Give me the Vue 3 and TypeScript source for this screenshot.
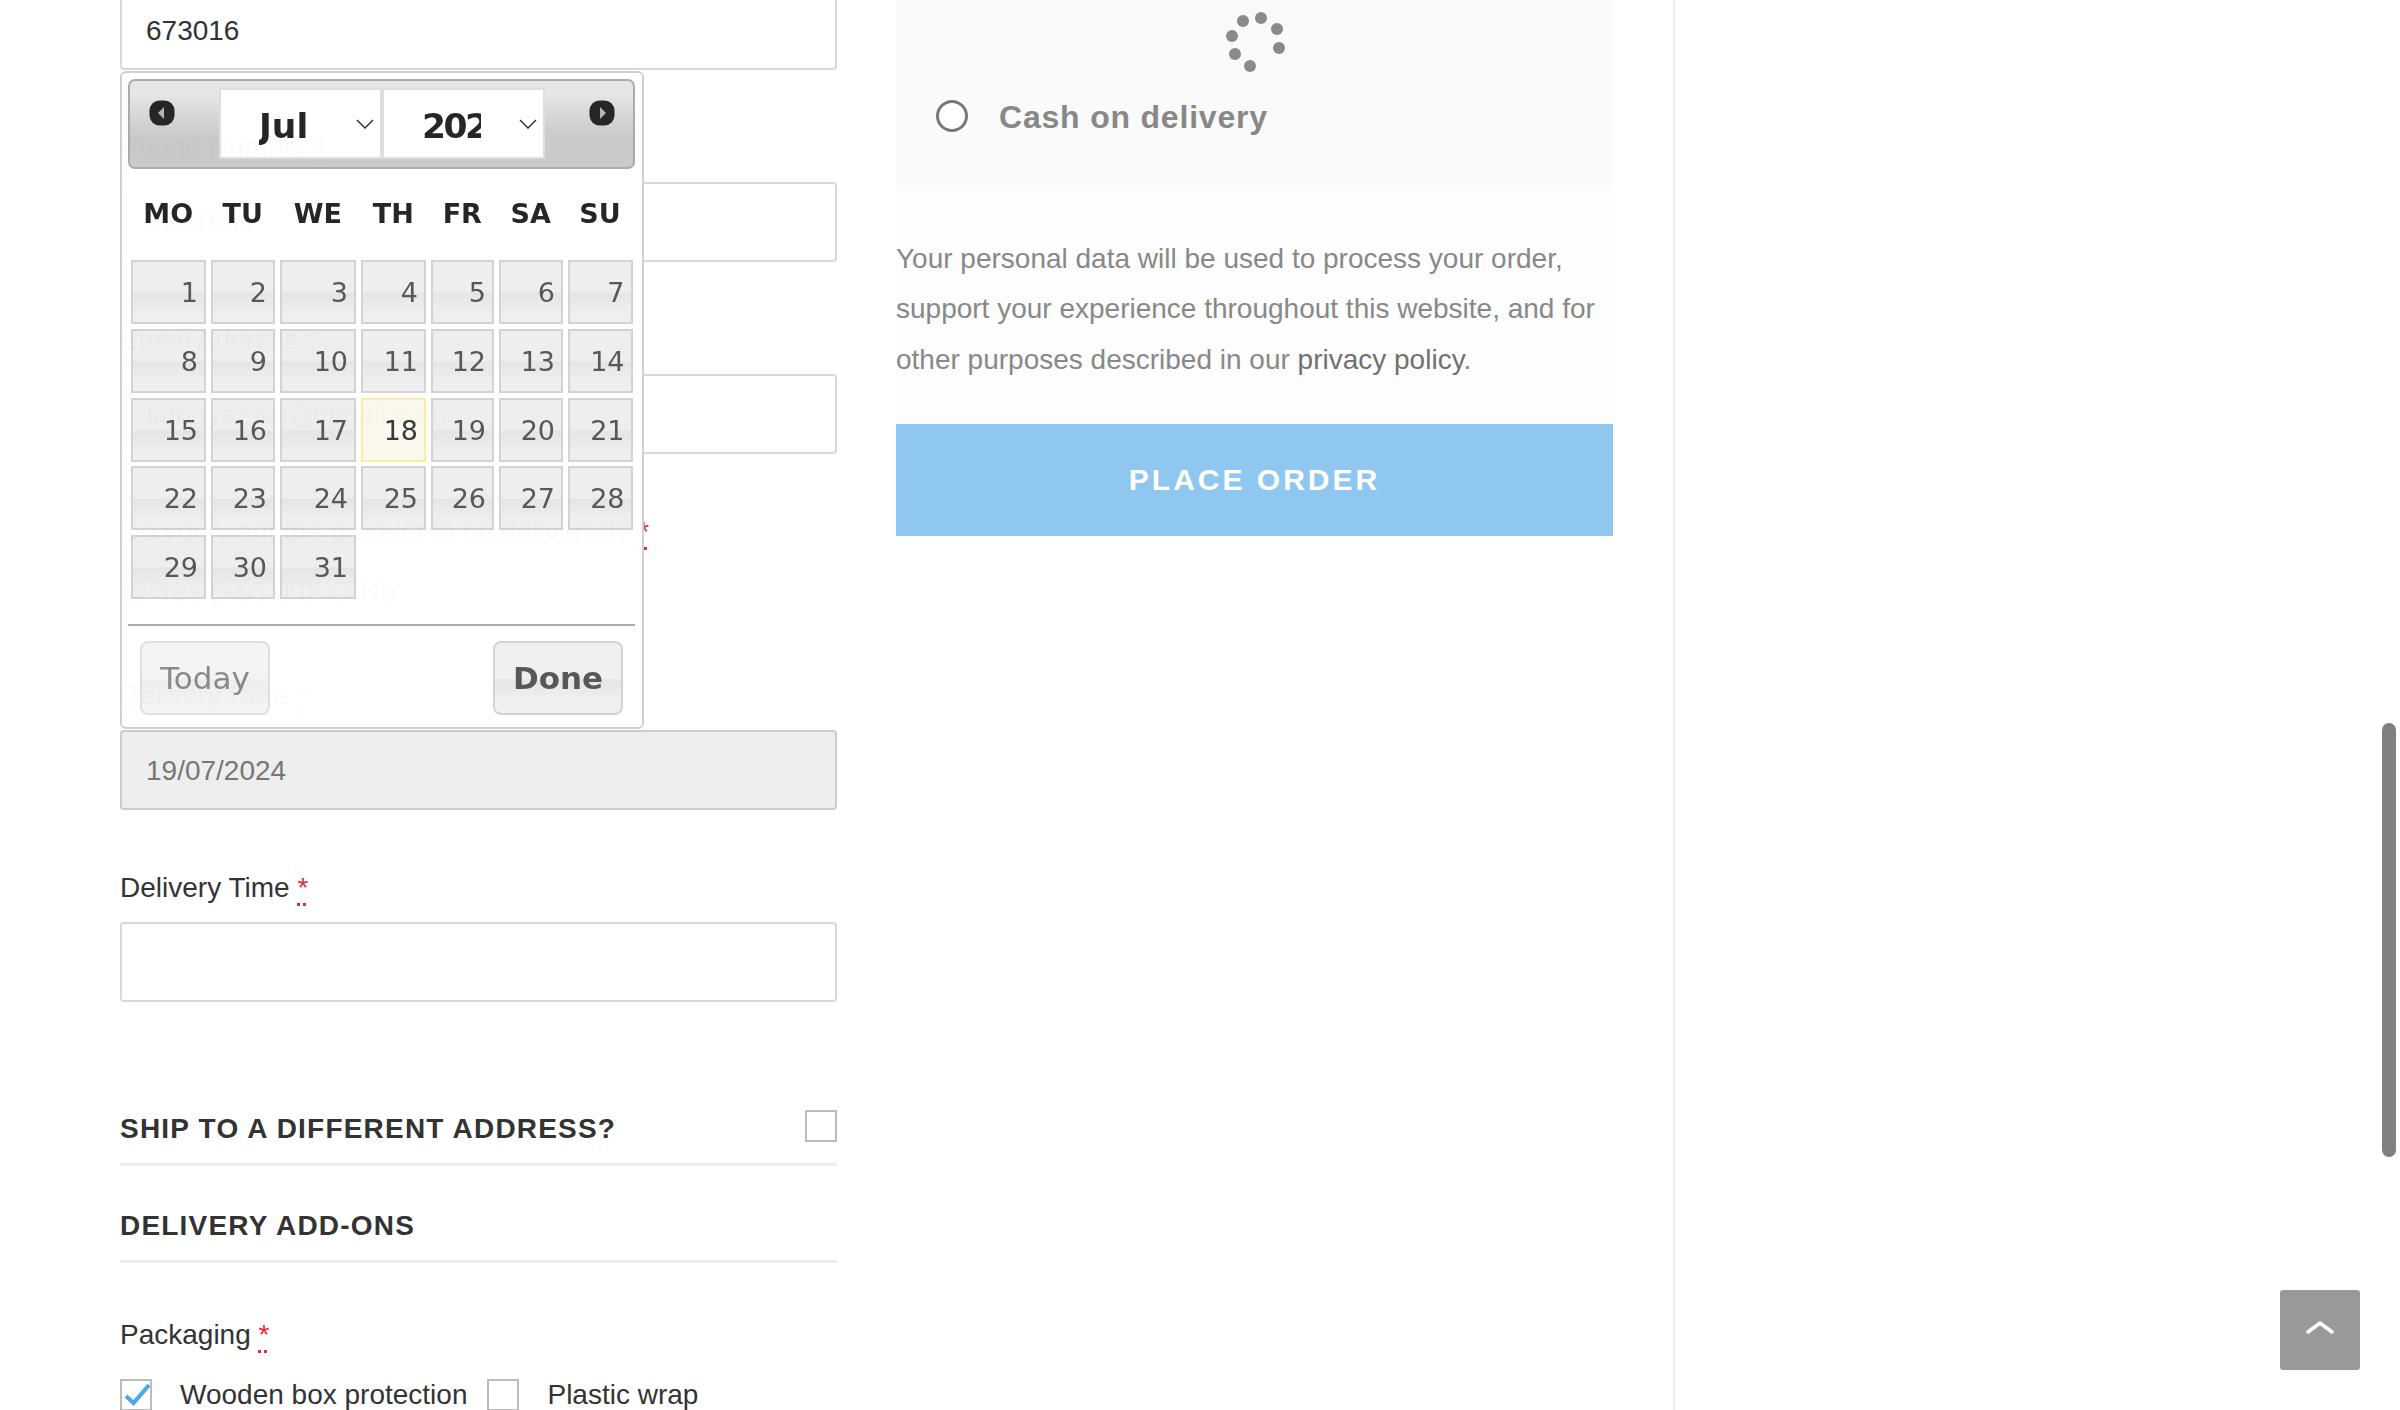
<script setup lang="ts">
const weekdays = ['MO', 'TU', 'WE', 'TH', 'FR', 'SA', 'SU'];
const days = Array.from({ length: 31 }, (_, i) => i + 1);
const today = 18;

// spinner dots, in px from the top left of the svg
const dots = [
  [17, 21], [35, 18], [51, 29], [53, 48], [24, 66], [9, 54], [6, 36],
];
</script>

<template>
  <div class="page">
    <section class="billing">
      <div class="field first">
        <div class="input">673016</div>
      </div>

      <div class="field">
        <label>Phone Number <abbr>*</abbr></label>
        <div class="input">8891550</div>
      </div>

      <div class="field">
        <label>Email Address <abbr>*</abbr></label>
        <div class="input">fidhayazeer@gmail.com</div>
      </div>

      <div class="field delivered">
        <label>Do you want the product to be delivered? <abbr>*</abbr></label>
        <div class="radios">
          <span class="dot on"></span><span>Yes (+$5.00)</span>
          <span class="dot"></span><span>No</span>
        </div>
      </div>

      <div class="field">
        <label>Delivery Date <abbr>*</abbr></label>
        <div class="input disabled">19/07/2024</div>
      </div>

      <div class="field">
        <label>Delivery Time <abbr>*</abbr></label>
        <div class="input"></div>
      </div>

      <div class="heading ship">
        <h3>SHIP TO A DIFFERENT ADDRESS?</h3>
        <span class="check"></span>
      </div>
      <div class="heading addons">
        <h3>DELIVERY ADD-ONS</h3>
      </div>

      <label class="packaging">Packaging <abbr>*</abbr></label>
      <div class="options">
        <span class="check">
          <svg width="28" height="28" viewBox="0 0 28 28">
            <polyline points="4,15 11.5,22 27,4" fill="none" stroke="#4aa8ea" stroke-width="4" />
          </svg>
        </span>
        <span class="opt-label">Wooden box protection</span>
        <span class="check second"></span>
        <span class="opt-label">Plastic wrap</span>
      </div>

      <div class="picker">
        <div class="pick-head">
          <svg class="arrow prev" width="26" height="26" viewBox="0 0 26 26">
            <rect x="0.5" y="0.5" width="25" height="25" rx="10" fill="#222" />
            <polygon points="15,7 9,13 15,19" fill="#b4b4b4" />
          </svg>
          <div class="selects">
            <div class="sel">
              <select class="month">
                <option>Jul</option>
                <option>Aug</option>
              </select>
              <svg class="chev" width="18" height="10" viewBox="0 0 18 10">
                <polyline points="1,1 9,9 17,1" fill="none" stroke="#333" stroke-width="1.5" />
              </svg>
            </div>
            <div class="sel">
              <select class="year">
                <option>2024</option>
                <option>2025</option>
              </select>
              <svg class="chev" width="18" height="10" viewBox="0 0 18 10">
                <polyline points="1,1 9,9 17,1" fill="none" stroke="#333" stroke-width="1.5" />
              </svg>
            </div>
          </div>
          <svg class="arrow next" width="26" height="26" viewBox="0 0 26 26">
            <rect x="0.5" y="0.5" width="25" height="25" rx="10" fill="#222" />
            <polygon points="11,7 17,13 11,19" fill="#b4b4b4" />
          </svg>
        </div>

        <div class="cal weekdays">
          <span v-for="w in weekdays" :key="w">{{ w }}</span>
        </div>

        <div class="cal days">
          <a v-for="d in days" :key="d" :class="{ today: d === today }">{{ d }}</a>
        </div>

        <div class="pick-foot">
          <button class="btn muted">Today</button>
          <button class="btn done">Done</button>
        </div>
      </div>
    </section>

    <section class="order">
      <div class="pay-box">
        <div class="pay-top"></div>
        <div class="pay-row">
          <span class="pay-radio"></span>
          <span class="pay-name">Cash on delivery</span>
        </div>
      </div>
      <p class="notice">
        Your personal data will be used to process your order, support your experience throughout
        this website, and for other purposes described in our <a>privacy policy</a>.
      </p>
      <button class="place">PLACE ORDER</button>

      <svg class="spinner" width="60" height="72" viewBox="0 0 60 72">
        <circle v-for="(p, i) in dots" :key="i" :cx="p[0]" :cy="p[1]" r="6" fill="#8a8a8a" />
      </svg>
    </section>

    <aside class="rail"></aside>

    <div class="scrollbar"></div>
    <div class="to-top">
      <svg width="30" height="18" viewBox="0 0 30 18">
        <polyline points="3,15 15,6 27,15" fill="none" stroke="#fff" stroke-width="3.5" stroke-linecap="round" stroke-linejoin="round" />
      </svg>
    </div>
  </div>
</template>

<style>
html,
body {
  margin: 0;
  overflow: hidden;
  background: #fff;
}
</style>

<style scoped>
.page {
  position: relative;
  display: flex;
  width: 2400px;
  height: 1410px;
  padding-left: 120px;
  box-sizing: border-box;
  overflow: hidden;
  font-family: "Liberation Sans", Arial, sans-serif;
  font-size: 28px;
  color: #333;
}

.billing {
  position: relative;
  width: 717px;
  flex: none;
}

.field {
  margin-bottom: 55px;
}

.field.first {
  margin-top: -10px;
}

.field label {
  display: block;
  line-height: 46px;
  margin-bottom: 11px;
}

abbr {
  color: #e0303a;
  text-decoration: underline dotted;
  text-decoration-thickness: 3px;
  text-underline-offset: 6px;
}

.input {
  height: 80px;
  box-sizing: border-box;
  border: 2px solid #d8d8d8;
  border-radius: 4px;
  padding: 0 24px;
  line-height: 78px;
}

.first .input {
  line-height: 78px;
}

.input.disabled {
  background: #eee;
  border-color: #ccc;
  color: #777;
}

.delivered {
  margin-bottom: 60px;
}

.delivered label {
  margin-bottom: 16px;
}

.radios {
  display: flex;
  align-items: center;
  gap: 10px;
  height: 42px;
}

.dot {
  width: 22px;
  height: 22px;
  box-sizing: border-box;
  border: 2px solid #888;
  border-radius: 50%;
  margin-left: 4px;
}

.dot.on {
  background: #4aa8ea;
}

.heading {
  display: flex;
  justify-content: space-between;
  align-items: center;
  height: 44px;
  padding-bottom: 12px;
  border-bottom: 3px solid #eee;
}

.heading h3 {
  margin: 0;
  font-size: 28px;
  font-weight: 700;
  letter-spacing: 1.2px;
  color: #333;
}

.ship {
  margin-top: 105px;
}

.addons {
  margin-top: 38px;
}

.packaging {
  display: block;
  line-height: 42px;
  margin-top: 51px;
  margin-bottom: 23px;
}

.options {
  display: flex;
  align-items: center;
}

.check {
  display: block;
  flex: none;
  width: 32px;
  height: 32px;
  box-sizing: border-box;
  border: 2px solid #bbb;
  background: #fff;
}

.check svg {
  display: block;
}

.ship .check {
  margin-top: -7px;
}

.opt-label {
  margin-left: 28px;
}

.check.second {
  margin-left: 20px;
}

/* datepicker, sits on top of the form */
.picker {
  position: absolute;
  left: 0;
  top: 71px;
  width: 524px;
  height: 658px;
  box-sizing: border-box;
  padding: 6px 7px 6px 6px;
  border: 2px solid #d0d0d0;
  border-radius: 6px;
  background: #fff;
  opacity: 0.98;
  font-family: "DejaVu Sans", Verdana, sans-serif;
  color: #222;
}

.pick-head {
  display: grid;
  grid-template-columns: 89px 326px 1fr;
  align-items: start;
  height: 90px;
  box-sizing: border-box;
  border: 2px solid #aaa;
  border-radius: 7px;
  background: linear-gradient(#e6e6e6 15%, #c9c9c9 65%);
}

.arrow {
  filter: blur(0.5px);
  margin-top: 19px;
}

.prev {
  margin-left: 19px;
}

.next {
  margin-left: 44px;
}

.selects {
  display: flex;
  margin-top: 7px;
}

.sel {
  position: relative;
  width: 163px;
  height: 71px;
}

.sel select {
  display: block;
  width: 163px;
  height: 71px;
  box-sizing: border-box;
  appearance: none;
  border: 2px solid #dedede;
  border-radius: 0;
  background: #fff;
  color: #222;
  font-family: "DejaVu Sans", Verdana, sans-serif;
  font-size: 34.5px;
  font-weight: 700;
  padding: 4px 62px 0 38px;
  outline: none;
}

.sel select.year {
  font-size: 34.5px;
  letter-spacing: -2.5px;
}

.chev {
  position: absolute;
  left: 137px;
  top: 31px;
}

.cal {
  display: grid;
  grid-template-columns: 75.5px 64.5px 76.5px 65.5px 63.5px 64.5px 65px;
  column-gap: 4.5px;
  margin-left: 2.5px;
}

.weekdays {
  height: 88px;
  margin-bottom: 3px;
  align-items: center;
  text-align: center;
  font-size: 27px;
  font-weight: 700;
}

.days {
  grid-auto-rows: 64px;
  row-gap: 4.75px;
}

.days a {
  box-sizing: border-box;
  border: 2px solid #d3d3d3;
  background: linear-gradient(#eee 50%, #e5e5e5 52%, #efefef 85%);
  color: #555;
  font-size: 27px;
  line-height: 62px;
  text-align: right;
  padding-right: 6px;
}

.days a.today {
  border-color: #fcefa1;
  background: #fbf9ee;
  color: #363636;
}

.pick-foot {
  display: flex;
  justify-content: space-between;
  margin-top: 25px;
  padding: 15px 12px 0 12px;
  border-top: 2px solid #aaa;
}

.btn {
  width: 130px;
  height: 74px;
  padding: 0;
  box-sizing: border-box;
  border: 2px solid #d3d3d3;
  border-radius: 8px;
  background: linear-gradient(#f0f0f0 50%, #e6e6e6 53%, #f0f0f0 85%);
  color: #555;
  font-family: "DejaVu Sans", Verdana, sans-serif;
  font-size: 31px;
}

.btn.muted {
  opacity: 0.7;
}

.btn.done {
  font-weight: 700;
}

/* order column, blocked by the loading overlay */
.order {
  position: relative;
  flex: none;
  width: 717px;
  margin-left: 59px;
  background: #fdfdfd;
  height: 536px;
}

.pay-box {
  height: 186px;
  background: #fafafa;
}

.pay-top {
  height: 46px;
  border-bottom: 1px solid #fdfdfd;
  box-sizing: border-box;
}

.pay-row {
  display: flex;
  align-items: center;
  height: 42px;
  margin-top: 49px;
  padding-left: 40px;
}

.pay-radio {
  width: 32px;
  height: 32px;
  box-sizing: border-box;
  border: 3px solid #777;
  border-radius: 50%;
  background: #fff;
}

.pay-name {
  margin-left: 31px;
  padding-top: 2px;
  font-size: 32px;
  font-weight: 700;
  letter-spacing: 0.8px;
  color: #888;
}

.notice {
  margin: 48px 0 39px;
  line-height: 50.4px;
  color: #888;
}

.notice a {
  color: #707070;
}

.place {
  display: block;
  width: 100%;
  height: 112px;
  border: 0;
  background: #8fc7f0;
  color: #fff;
  font-family: "Liberation Sans", Arial, sans-serif;
  font-size: 30px;
  font-weight: 700;
  letter-spacing: 3px;
}

.spinner {
  position: absolute;
  left: 330px;
  top: 0;
}

.rail {
  margin-left: 60px;
  border-left: 2px solid #eee;
}

.scrollbar {
  position: absolute;
  left: 2382px;
  top: 723px;
  width: 14px;
  height: 434px;
  border-radius: 7px;
  background: #808080;
}

.to-top {
  position: absolute;
  left: 2280px;
  top: 1290px;
  width: 80px;
  height: 80px;
  display: flex;
  justify-content: center;
  padding-top: 27px;
  box-sizing: border-box;
  border-radius: 3px;
  background: #999;
}
</style>
